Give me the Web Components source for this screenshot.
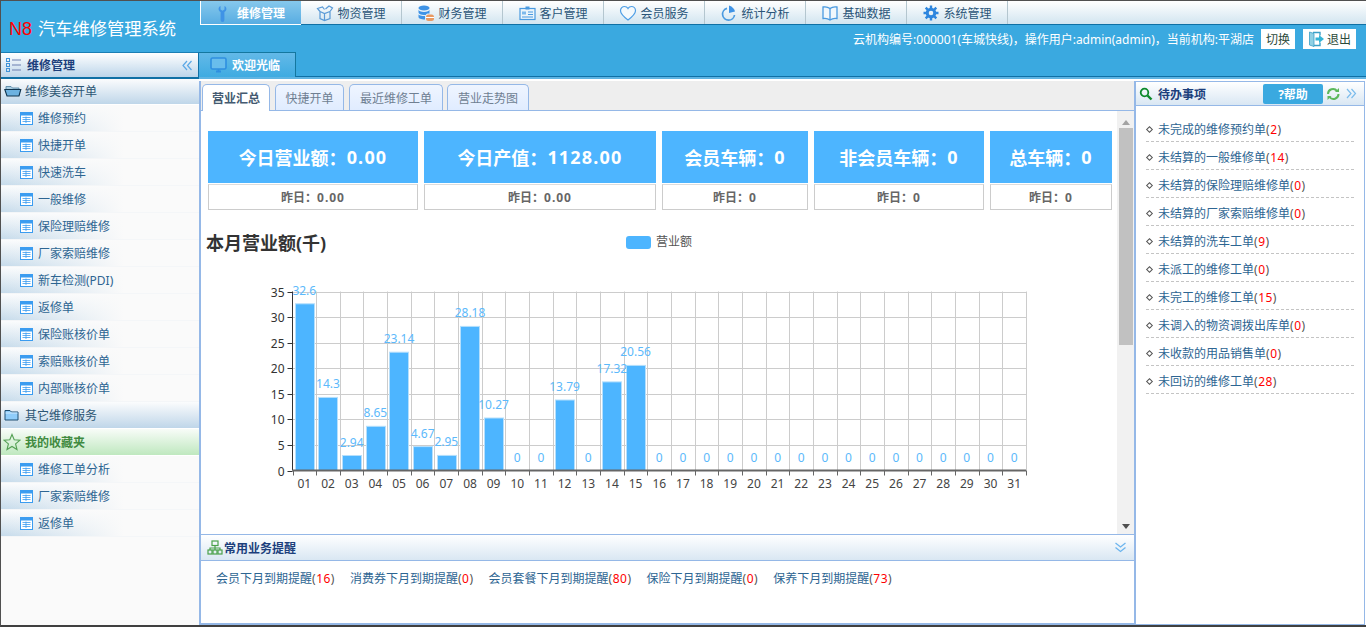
<!DOCTYPE html>
<html lang="zh-CN">
<head>
<meta charset="utf-8">
<title>N8 汽车维修管理系统</title>
<style>
  html, body { margin: 0; padding: 0; height: 100%; overflow: hidden; }
  body {
    font: 12px "Noto Sans", "Noto Sans CJK SC", sans-serif;
    color: #333;
    background: #fff;
  }
</style>
</head>
<body>
<app-shell></app-shell>

<script>
// ====== ICONS ======
const ICONS = {
  wrench: '<path d="M6 2v3.500l2 1.300 2-1.300V2c1.300.6 1.900 1.800 1.900 3 0 1.400-.8 2.400-2 3.100V16a1.900 1.900 0 0 1-3.800 0V8.100C4.900 7.400 4.100 6.400 4.100 5c0-1.200.6-2.400 1.900-3z" fill="#3f93e6"/>',
  box: '<g fill="none" stroke="#5a9ad6" stroke-width="1.200"><path d="M3.500 7.500v7l4.500 2 5.500-2v-7M3.500 7.500L8 9.500l5.500-2M8 9.500v7"/><path d="M3.500 7.500L1 4.500l5-1.500 2 2.500M13.500 7.500L16 4l-3.500-2L9 5"/></g>',
  db: '<ellipse cx="6.500" cy="4" rx="5.500" ry="2.500" fill="#3f93e6"/><path d="M1 5.500v3C1 9.900 3.500 11 6.500 11c.6 0 1.200 0 1.700-.1.400-.6 1-1 1.800-1.300H12V5.500C12 6.900 9.500 8 6.500 8S1 6.900 1 5.500z" fill="#3f93e6"/><path d="M1 10v3c0 1.400 2.500 2.500 6.500 2.500V12C4 12 1 11.400 1 10z" fill="#3f93e6"/><rect x="8.500" y="10.500" width="8" height="6.500" rx="2.500" fill="#e99a63"/><path d="M8.500 13.500h8" stroke="#fff"/>',
  card: '<rect x="1.500" y="4.500" width="15" height="11" fill="#eaf4fb" stroke="#4a9ae0" stroke-width="1.200"/><rect x="7" y="2.500" width="4" height="3" fill="#4a9ae0"/><rect x="3.500" y="7.500" width="4" height="3" fill="#7db9ec"/><path d="M9.500 8h5M9.500 10.500h5M3.500 13h11" stroke="#4a9ae0"/>',
  heart: '<path d="M8.500 16C4 12.500 1 10 1 6.700 1 4.300 2.900 2.500 5 2.500c1.500 0 2.800.8 3.500 2 .7-1.200 2-2 3.500-2 2.100 0 4 1.800 4 4.200 0 3.300-3 5.800-7.500 9.300z" fill="#f4f9fc" stroke="#4f9fe6" stroke-width="1.200"/>',
  pie: '<path d="M6.500 4.400A6 6 0 1 0 14 11" fill="none" stroke="#4a9ae0" stroke-width="1.700"/><path d="M8.500 1.500v7.500l6-1.500c0-1.200-2.500-5.200-6-6z" fill="#3f93e6"/>',
  book: '<path d="M8.500 4.500C6.500 3 4 2.500 1.500 3v11.500c2.500-.5 5 0 7 1.500 2-1.500 4.500-2 7-1.500V3c-2.500-.5-5 0-7 1.500z" fill="#f0f7fc" stroke="#4a9ae0" stroke-width="1.300"/><path d="M8.500 4.500V16" stroke="#4a9ae0" stroke-width="1.300"/>',
  gear: '<circle cx="8.500" cy="9" r="3.800" fill="none" stroke="#2e86de" stroke-width="3"/><g stroke="#2e86de" stroke-width="2.400"><path d="M8.500 1.500v3M8.500 13.500v3M1 9h3M13 9h3M3.200 3.700l2.200 2.200M11.600 12.100l2.200 2.200M13.800 3.700l-2.200 2.200M5.400 12.100l-2.200 2.200"/></g>',
  lines: '<g fill="none" stroke="#3f93d8"><rect x="1.500" y="1.500" width="3" height="3"/><rect x="1.500" y="6.500" width="3" height="3"/><rect x="1.500" y="11.500" width="3" height="3"/></g><path d="M7 3h9M7 8h9M7 13h9" stroke="#6a7fb0"/>',
  chevL: '<path d="M6 2L2 6.500 6 11M10.500 2L6.500 6.500 10.500 11" fill="none" stroke="#5ba8e6" stroke-width="1.200"/>',
  chevR: '<path d="M2 2l4 4.500L2 11M6.500 2l4 4.500-4 4.500" fill="none" stroke="#7bbcec" stroke-width="1.200"/>',
  chevD: '<path d="M1.500 2L6.500 6l5-4M1.500 6.500l5 4 5-4" fill="none" stroke="#6db5ee" stroke-width="1.300"/>',
  monitor: '<rect x="1" y="1" width="15" height="11" rx="1.500" fill="#69bdec" stroke="#2f8fe0" stroke-width="1.600"/><path d="M6 14.500h5M8.500 12v2.500" stroke="#2f8fe0" stroke-width="1.800"/>',
  folderOpen: '<path d="M2 4.500h5l1.500 1.500H15v2H2z" fill="#a9cde2" stroke="#4a7c9c" stroke-width=".8"/><path d="M.8 7.500h16l-1.800 6.500H3z" fill="#6db2e0" stroke="#10344e" stroke-width="1.100"/>',
  folder: '<path d="M1 4.500h5L7.500 6H14v8H1z" fill="#90cdfa" stroke="#1f4f72"/><path d="M1.500 7h12" stroke="#d0eaff"/>',
  star: '<path d="M9 1.500l2.200 5.300 5.800.4-4.400 3.700 1.400 5.600L9 13.500l-5 3 1.400-5.600L1 7.200l5.800-.4z" fill="none" stroke="#54a054" stroke-width="1.100"/>',
  table: '<rect x=".5" y=".5" width="12" height="12" fill="#fff" stroke="#3b9cf0"/><rect x="1" y="1" width="11" height="2.500" fill="#3b9cf0"/><path d="M2.500 5.500h8M2.500 7.500h8M2.500 9.500h8M6 4.500v6.500" stroke="#3b9cf0" stroke-width=".8"/>',
  search: '<circle cx="5.500" cy="5.500" r="3.800" fill="none" stroke="#0d8a2c" stroke-width="1.800"/><path d="M8.500 8.500l4 4" stroke="#0d8a2c" stroke-width="2.400"/>',
  refresh: '<path d="M2 7a5 5 0 0 1 9-3M12.500 7a5 5 0 0 1-9 3" fill="none" stroke="#5cb85c" stroke-width="2"/><path d="M9 5h4V1zM5.500 9h-4v4z" fill="#5cb85c"/>',
  org: '<g fill="none" stroke="#4aa14a" stroke-width="1.200"><rect x="5" y="1" width="6" height="4.500"/><rect x="1" y="10" width="4" height="4"/><rect x="6" y="10" width="4" height="4"/><rect x="11" y="10" width="4" height="4"/><path d="M8 5.500V8M3 10V8h10v2M8 8v2"/></g>',
  exit: '<path d="M5 1.500h7v3M12 11.500v3H5" fill="none" stroke="#3aa0c8" stroke-width="1.400"/><path d="M1.500 1l4.500 1.500v13L1.500 14z" fill="#8fd0e4" stroke="#3aa0c8" stroke-width=".8"/><path d="M7.500 6.500h3.500V4l5 4-5 4V9.500H7.500z" fill="#35b4d6"/>'
};

// ====== ICON ======
class UiIcon extends HTMLElement {
  connectedCallback() {
    const w = this.getAttribute('w') || 16;
    const h = this.getAttribute('h') || w;
    const vb = this.getAttribute('vb') || `0 0 ${w} ${h}`;
    this.attachShadow({ mode: 'open' }).innerHTML = `
      <style>:host { display: inline-flex; flex: none; } svg { display: block; }</style>
      <svg width="${w}" height="${h}" viewBox="${vb}">${ICONS[this.getAttribute('name')] || ''}</svg>`;
  }
}

// ====== SHELL ======
class AppShell extends HTMLElement {
  connectedCallback() {
    this.attachShadow({ mode: 'open' }).innerHTML = `
    <style>
      :host {
        display: flex;
        flex-direction: column;
        width: 1366px;
        height: 627px;
        box-sizing: border-box;
        border-top: 1px solid #505050;
        border-left: 1px solid #505050;
        border-bottom: 2px solid #404040;
        background: #3aa9e0;
      }
      .body { flex: 1; display: flex; min-height: 0; }
    </style>
    <top-header></top-header>
    <div class="body">
      <side-menu></side-menu>
      <work-area></work-area>
    </div>`;
  }
}

// ====== HEADER ======
class TopHeader extends HTMLElement {
  connectedCallback() {
    const nav = [
      ['wrench', '维修管理', 1], ['box', '物资管理'], ['db', '财务管理'], ['card', '客户管理'],
      ['heart', '会员服务'], ['pie', '统计分析'], ['book', '基础数据'], ['gear', '系统管理']
    ];
    this.attachShadow({ mode: 'open' }).innerHTML = `
    <style>
      :host { display: flex; height: 51px; flex: none; background: #3aa9e0; }
      .brand {
        width: 199px;
        flex: none;
        box-sizing: border-box;
        padding: 16px 0 0 8px;
        font-size: 17.250px;
        line-height: 24px;
        color: #fff;
        white-space: nowrap;
      }
      .brand b { font: 18px "Liberation Sans", sans-serif; color: #f00; margin-right: 6px; }
      .right { flex: 1; display: flex; flex-direction: column; min-width: 0; }
      nav {
        display: flex;
        height: 24px;
        box-sizing: border-box;
        background: linear-gradient(#fff, #d2e5f0);
        border-bottom: 1px solid #0f70a5;
      }
      .info {
        display: flex;
        justify-content: flex-end;
        align-items: center;
        gap: 7px;
        padding: 4px 10px 0 0;
        color: #fff;
      }
      .btn {
        display: flex;
        align-items: center;
        justify-content: center;
        gap: 2px;
        height: 20px;
        background: #fff;
        color: #2c4a3a;
      }
      .switch { width: 34px; }
      .exit { width: 53px; margin-left: 1px; }
    </style>
    <div class="brand"><b>N8</b>汽车维修管理系统</div>
    <div class="right">
      <nav>${nav.map(n => `<nav-item icon="${n[0]}" ${n[2] ? 'active' : ''}>${n[1]}</nav-item>`).join('')}</nav>
      <div class="info">
        <span>云机构编号:000001(车城快线)，操作用户:admin(admin)，当前机构:平湖店</span>
        <span class="btn switch">切换</span>
        <span class="btn exit"><ui-icon name="exit" w="17"></ui-icon>退出</span>
      </div>
    </div>`;
  }
}

class NavItem extends HTMLElement {
  connectedCallback() {
    this.attachShadow({ mode: 'open' }).innerHTML = `
    <style>
      :host {
        display: flex;
        align-items: center;
        justify-content: center;
        gap: 3px;
        width: 101px;
        height: 23px;
        box-sizing: border-box;
        border-right: 1px solid #b4c6cf;
        color: #2a5578;
      }
      :host([active]) {
        justify-content: flex-start;
        padding-left: 13px;
        background: linear-gradient(#86c8ec, #58ade2);
        border-right: 0;
        border-left: 1px solid #fff;
        box-shadow: 0 1px 0 #fff;
        color: #fff;
        font-weight: bold;
        gap: 5px;
      }
    </style>
    <ui-icon name="${this.getAttribute('icon')}" w="18" h="18" vb="0 0 17 18"></ui-icon><slot></slot>`;
  }
}

// ====== SIDE MENU ======
class SideMenu extends HTMLElement {
  connectedCallback() {
    const first = ['维修预约', '快捷开单', '快速洗车', '一般维修', '保险理赔维修', '厂家索赔维修', '新车检测(PDI)', '返修单', '保险账核价单', '索赔账核价单', '内部账核价单'];
    const fav = ['维修工单分析', '厂家索赔维修', '返修单'];
    const items = list => list.map(t => `<menu-item>${t}</menu-item>`).join('');
    this.attachShadow({ mode: 'open' }).innerHTML = `
    <style>
      :host {
        display: flex;
        flex-direction: column;
        width: 198px;
        flex: none;
        background: #fafafa;
      }
      .head {
        display: flex;
        align-items: center;
        gap: 6px;
        height: 27px;
        box-sizing: border-box;
        padding: 0 5px 0 4px;
        background: linear-gradient(#fff, #bcd5ea);
        border-top: 1px solid #1b7fb4;
        border-right: 1px solid #0f70a5;
        border-bottom: 2px solid #0f70a5;
        color: #1c3f7c;
        font-weight: bold;
      }
      .head span { flex: 1; }
    </style>
    <div class="head"><ui-icon name="lines"></ui-icon><span>维修管理</span><ui-icon name="chevL" w="12" h="13"></ui-icon></div>
    <menu-section icon="folderOpen" short>维修美容开单</menu-section>
    ${items(first)}
    <menu-section icon="folder">其它维修服务</menu-section>
    <menu-section icon="star" fav>我的收藏夹</menu-section>
    ${items(fav)}`;
  }
}

class MenuSection extends HTMLElement {
  connectedCallback() {
    this.attachShadow({ mode: 'open' }).innerHTML = `
    <style>
      :host {
        display: flex;
        align-items: center;
        gap: 3px;
        height: 27px;
        flex: none;
        box-sizing: border-box;
        padding-left: 3px;
        border-bottom: 1px solid #fff;
        background: linear-gradient(#fbfcfd, #bfd6e9);
        color: #2d5674;
      }
      :host([short]) { height: 26px; padding-bottom: 2px; }
      :host([fav]) {
        background: linear-gradient(#f8fcf8, #bfe8bf);
        color: #3f8a3f;
        font-weight: bold;
        padding-left: 2px;
        gap: 4px;
      }
    </style>
    <ui-icon name="${this.getAttribute('icon')}" w="18" h="18"></ui-icon><slot></slot>`;
  }
}

class MenuItem extends HTMLElement {
  connectedCallback() {
    this.attachShadow({ mode: 'open' }).innerHTML = `
    <style>
      :host {
        display: flex;
        align-items: center;
        gap: 5px;
        height: 27px;
        flex: none;
        box-sizing: border-box;
        padding-left: 19px;
        border-bottom: 1px solid #f4f6f8;
        background:
          linear-gradient(to right, rgba(250,250,250,0) 0, #fafafa 62%),
          linear-gradient(#fbfcfd, #c6dbeb);
        color: #2d6592;
      }
    </style>
    <ui-icon name="table" w="13"></ui-icon><slot></slot>`;
  }
}

// ====== WORK AREA ======
class WorkArea extends HTMLElement {
  connectedCallback() {
    this.attachShadow({ mode: 'open' }).innerHTML = `
    <style>
      :host { flex: 1; display: flex; flex-direction: column; min-width: 0; background: #3aa9e0; }
      .strip {
        height: 25px;
        flex: none;
        box-sizing: border-box;
        border-bottom: 1px solid #0f70a5;
        display: flex;
      }
      .welcome {
        display: flex;
        align-items: center;
        gap: 5px;
        width: 97px;
        height: 25px;
        box-sizing: border-box;
        padding-left: 11px;
        border-top: 1px solid #14779f;
        border-right: 1px solid #14779f;
        background: linear-gradient(#63b9e8, #3fabe1);
        color: #fff;
        font-weight: bold;
      }
      .rule { height: 2px; flex: none; background: #5fb4e2; }
      .panes { flex: 1; display: flex; min-height: 0; background: #fff; padding-top: 2px; }
      .center {
        width: 937px;
        flex: none;
        display: flex;
        flex-direction: column;
        box-sizing: border-box;
        border-left: 2px solid #95b8e7;
        border-right: 2px solid #95b8e7;
        border-bottom: 2px solid #95b8e7;
      }
    </style>
    <div class="strip"><div class="welcome"><ui-icon name="monitor" w="17" h="16"></ui-icon>欢迎光临</div></div>
    <div class="rule"></div>
    <div class="panes">
      <div class="center">
        <tab-bar></tab-bar>
        <summary-pane></summary-pane>
        <reminder-panel></reminder-panel>
      </div>
      <todo-panel></todo-panel>
    </div>`;
  }
}

class TabBar extends HTMLElement {
  connectedCallback() {
    const tabs = [['营业汇总', 68, 1], ['快捷开单', 69], ['最近维修工单', 94], ['营业走势图', 82]];
    this.attachShadow({ mode: 'open' }).innerHTML = `
    <style>
      :host {
        display: flex;
        align-items: flex-end;
        gap: 5px;
        height: 30px;
        flex: none;
        box-sizing: border-box;
        padding-left: 1px;
        background: #eee;
        border-bottom: 1px solid #95b8e7;
      }
      span {
        display: flex;
        align-items: center;
        justify-content: center;
        height: 26px;
        box-sizing: border-box;
        border: 1px solid #95b8e7;
        border-bottom: 0;
        border-radius: 5px 5px 0 0;
        background: linear-gradient(#eff5ff, #e0ecff);
        color: #6f7f92;
      }
      span:last-child { margin-left: -1px; }
      span.on {
        height: 27px;
        margin-bottom: -1px;
        background: #fff;
        color: #445a70;
        font-weight: bold;
      }
    </style>
    ${tabs.map(t => `<span class="${t[2] ? 'on' : ''}" style="width:${t[1]}px">${t[0]}</span>`).join('')}`;
  }
}

class SummaryPane extends HTMLElement {
  connectedCallback() {
    this.attachShadow({ mode: 'open' }).innerHTML = `
    <style>
      :host { flex: 1; display: flex; min-height: 0; background: #fff; }
      .scroll { flex: 1; min-width: 0; padding: 20px 5px 0 7px; box-sizing: border-box; }
      .stats { display: grid; grid-template-columns: 210px 232px 146px 170px 122px; gap: 6px; }
      bar-chart { margin: 9px 0 0 -7px; }
      .bar {
        width: 17px;
        flex: none;
        display: flex;
        flex-direction: column;
        align-items: center;
        background: #f1f1f1;
      }
      .up, .down { width: 0; height: 0; border: 4px solid transparent; }
      .up { border-bottom: 5px solid #a3a3a3; margin: 5px 0 3px; }
      .down { border-top: 5px solid #505050; margin-top: auto; margin-bottom: 1px; }
      .thumb { width: 14px; height: 217px; background: #c1c1c1; }
    </style>
    <div class="scroll">
      <div class="stats">
        <stat-card label="今日营业额" value="0.00" prev="0.00"></stat-card>
        <stat-card label="今日产值" value="1128.00" prev="0.00"></stat-card>
        <stat-card label="会员车辆" value="0" prev="0"></stat-card>
        <stat-card label="非会员车辆" value="0" prev="0"></stat-card>
        <stat-card label="总车辆" value="0" prev="0"></stat-card>
      </div>
      <bar-chart></bar-chart>
    </div>
    <div class="bar"><i class="up"></i><div class="thumb"></div><i class="down"></i></div>`;
  }
}

class StatCard extends HTMLElement {
  connectedCallback() {
    this.attachShadow({ mode: 'open' }).innerHTML = `
    <style>
      :host { display: block; }
      .top {
        height: 52px;
        display: flex;
        align-items: center;
        justify-content: center;
        background: #4db5ff;
        color: #fff;
        font-size: 18px;
        font-weight: bold;
      }
      .top span { letter-spacing: 1.200px; }
      .sub {
        height: 26px;
        box-sizing: border-box;
        margin-top: 1px;
        border: 1px solid #ccc;
        border-top: 1px solid #ddd;
        display: flex;
        align-items: center;
        justify-content: center;
        color: #666;
        font-weight: bold;
      }
      .sub span { letter-spacing: 1px; }
    </style>
    <div class="top">${this.getAttribute('label')}：<span>${this.getAttribute('value')}</span></div>
    <div class="sub">昨日：<span>${this.getAttribute('prev')}</span></div>`;
  }
}

// ====== CHART ======
class BarChart extends HTMLElement {
  connectedCallback() {
    const data = [32.6, 14.3, 2.94, 8.65, 23.14, 4.67, 2.95, 28.18, 10.27, 0, 0, 13.79, 0, 17.32, 20.56,
      0, 0, 0, 0, 0, 0, 0, 0, 0, 0, 0, 0, 0, 0, 0, 0];
    // coordinates inside the svg: it starts at x=201, y=219 on the page
    const left = 91.500, right = 825, top = 72.500, base = 251.500;
    const cell = (right - left) / 31;
    const unit = (base - top) / 35;
    let grid = '', ticks = '', bars = '', labels = '';
    for (let v = 0; v <= 35; v += 5) {
      const y = Math.round(base - v * unit) + .5;
      if (v) grid += `<path d="M${left} ${y}H${right}" stroke="#ccc"/>`;
      ticks += `<path d="M${left - 5} ${y}H${left}" stroke="#333"/>`;
      labels += `<text x="${left - 8}" y="${y + 4}" text-anchor="end" fill="#333">${v}</text>`;
    }
    for (let i = 0; i <= 31; i++) {
      const x = Math.round(left + i * cell) + .5;
      if (i) grid += `<path d="M${x} ${top}V${base}" stroke="#ccc"/>`;
      ticks += `<path d="M${x} ${base}v5" stroke="#666"/>`;
    }
    data.forEach((v, i) => {
      const cx = left + (i + .5) * cell;
      const h = v * unit;
      if (v) bars += `<rect x="${Math.round(cx - 9.500) + .5}" y="${(base - h).toFixed(1)}" width="19" height="${h.toFixed(1)}" fill="#4db5ff" stroke="#b5dffc"/>`;
      labels += `<text x="${cx.toFixed(1)}" y="${(base - h - 9).toFixed(1)}" text-anchor="middle" fill="#5cb9fb">${v}</text>`;
      labels += `<text x="${cx.toFixed(1)}" y="${base + 17}" text-anchor="middle" fill="#444">${String(i + 1).padStart(2, '0')}</text>`;
    });
    this.attachShadow({ mode: 'open' }).innerHTML = `
    <style>
      :host { display: block; }
      svg { display: block; font-family: "Noto Sans", "Noto Sans CJK SC", sans-serif; font-size: 12px; }
    </style>
    <svg width="915" height="300" viewBox="0 0 915 300">
      <text x="5" y="31" font-size="18" font-weight="bold" fill="#333">本月营业额(千)</text>
      <rect x="425" y="17" width="25" height="13" rx="3" fill="#4db5ff"/>
      <text x="455" y="27" fill="#555">营业额</text>
      ${grid}${bars}
      <path d="M${left} ${top}V${base}" stroke="#333"/>
      <path d="M${left} ${base}H${right}" stroke="#666" stroke-width="2"/>
      ${ticks}${labels}
    </svg>`;
  }
}

// ====== REMINDERS ======
class ReminderPanel extends HTMLElement {
  connectedCallback() {
    const rows = [['会员下月到期提醒', 16], ['消费券下月到期提醒', 0], ['会员套餐下月到期提醒', 80], ['保险下月到期提醒', 0], ['保养下月到期提醒', 73]];
    this.attachShadow({ mode: 'open' }).innerHTML = `
    <style>
      :host { display: block; height: 89px; flex: none; box-sizing: border-box; border-top: 1px solid #95b8e7; }
      .head {
        display: flex;
        align-items: center;
        gap: 1px;
        height: 26px;
        box-sizing: border-box;
        padding: 0 7px 0 6px;
        background: linear-gradient(#fff, #d9e7f3);
        border-bottom: 1px solid #95b8e7;
        color: #1c3f7c;
        font-weight: bold;
      }
      .head span { flex: 1; }
      .rows { display: flex; gap: 15px; padding: 8px 0 0 15px; color: #2d6592; }
      .rows i { font-style: normal; color: #555; letter-spacing: .5px; }
      .rows b { font-weight: normal; color: #f00; }
    </style>
    <div class="head"><ui-icon name="org"></ui-icon><span>常用业务提醒</span><ui-icon name="chevD" w="13" h="13"></ui-icon></div>
    <div class="rows">${rows.map(r => `<span>${r[0]}<i>(<b>${r[1]}</b>)</i></span>`).join('')}</div>`;
  }
}

// ====== TODO ======
class TodoPanel extends HTMLElement {
  connectedCallback() {
    const rows = [['未完成的维修预约单', 2], ['未结算的一般维修单', 14], ['未结算的保险理赔维修单', 0], ['未结算的厂家索赔维修单', 0], ['未结算的洗车工单', 9],
      ['未派工的维修工单', 0], ['未完工的维修工单', 15], ['未调入的物资调拨出库单', 0], ['未收款的用品销售单', 0], ['未回访的维修工单', 28]];
    this.attachShadow({ mode: 'open' }).innerHTML = `
    <style>
      :host {
        flex: 1;
        display: flex;
        flex-direction: column;
        margin-right: 1px;
        box-sizing: border-box;
        border-right: 1px solid #95b8e7;
        border-bottom: 1px solid #95b8e7;
      }
      .head {
        display: flex;
        align-items: center;
        height: 25px;
        flex: none;
        box-sizing: border-box;
        padding-left: 3px;
        background: linear-gradient(#fff, #d9e7f3);
        border-top: 1px solid #95b8e7;
        border-bottom: 1px solid #95b8e7;
        color: #1c3f7c;
        font-weight: bold;
      }
      .head .t { flex: 1; padding-left: 5px; }
      .help {
        display: flex;
        align-items: center;
        justify-content: center;
        width: 60px;
        height: 20px;
        margin-right: 3px;
        border-radius: 2px;
        background: #3aa9e0;
        color: #fff;
      }
      .chev { margin: 0 7px 0 5px; }
      .rows { padding: 8px 10px 0 10px; }
    </style>
    <div class="head">
      <ui-icon name="search" w="14"></ui-icon>
      <span class="t">待办事项</span>
      <span class="help">?帮助</span>
      <ui-icon name="refresh" w="14"></ui-icon>
      <ui-icon class="chev" name="chevR" w="12" h="13"></ui-icon>
    </div>
    <div class="rows">${rows.map(r => `<todo-item count="${r[1]}">${r[0]}</todo-item>`).join('')}</div>`;
  }
}

class TodoItem extends HTMLElement {
  connectedCallback() {
    this.attachShadow({ mode: 'open' }).innerHTML = `
    <style>
      :host {
        display: flex;
        align-items: center;
        height: 28px;
        box-sizing: border-box;
        padding: 3px 0 0 1px;
        border-bottom: 1px dashed #c4c4c4;
        color: #2d6592;
      }
      i { width: 3px; height: 3px; margin-right: 6px; border: 1px solid #555; transform: rotate(45deg); }
      span { color: #555; letter-spacing: .5px; }
      b { font-weight: normal; color: #f00; }
    </style>
    <i></i><slot></slot><span>(<b>${this.getAttribute('count')}</b>)</span>`;
  }
}

customElements.define('ui-icon', UiIcon);
customElements.define('app-shell', AppShell);
customElements.define('top-header', TopHeader);
customElements.define('nav-item', NavItem);
customElements.define('side-menu', SideMenu);
customElements.define('menu-section', MenuSection);
customElements.define('menu-item', MenuItem);
customElements.define('work-area', WorkArea);
customElements.define('tab-bar', TabBar);
customElements.define('summary-pane', SummaryPane);
customElements.define('stat-card', StatCard);
customElements.define('bar-chart', BarChart);
customElements.define('reminder-panel', ReminderPanel);
customElements.define('todo-panel', TodoPanel);
customElements.define('todo-item', TodoItem);
</script>
</body>
</html>
